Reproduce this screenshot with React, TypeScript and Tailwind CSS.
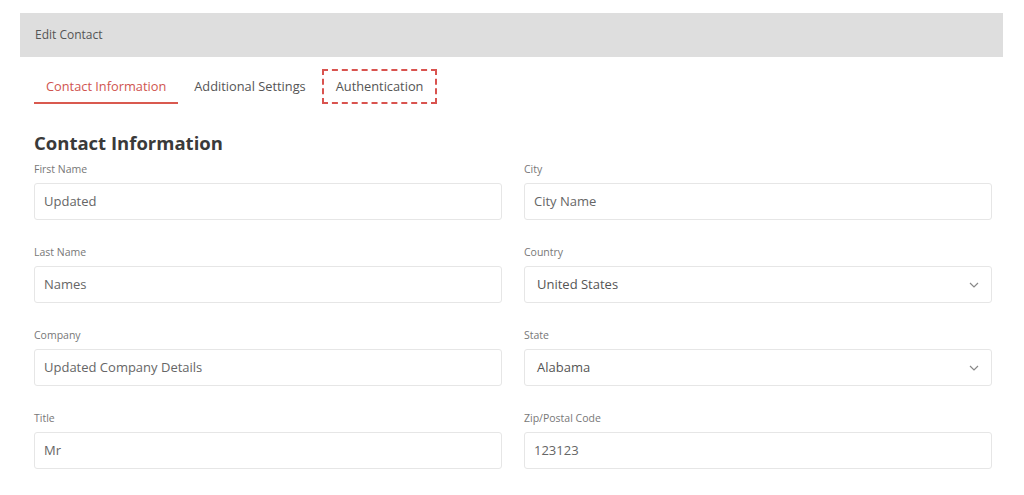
import React from 'react';

interface FieldProps {
  label: string;
  value: string;
  select?: boolean;
}

const Field: React.FC<FieldProps> = ({ label, value, select }) => {
  return (
    <div className="flex flex-col">
      <label className="text-[10.5px] leading-[14px] text-[#777] mb-[7px]">{label}</label>
      {select ? (
        <div className="h-[37px] border border-[#e6e6e6] rounded-[3px] flex items-center justify-between pl-[12px] pr-[12px] text-[13px] text-[#555]">
          <span>{value}</span>
          <svg width="10" height="6" viewBox="0 0 10 6" fill="none" stroke="#888" strokeWidth="1.2">
            <path d="M1 1l4 4 4-4" />
          </svg>
        </div>
      ) : (
        <div className="h-[37px] border border-[#e6e6e6] rounded-[3px] flex items-center px-[9px] text-[13px] text-[#666]">
          {value}
        </div>
      )}
    </div>
  );
};

const left = [
  { label: 'First Name', value: 'Updated' },
  { label: 'Last Name', value: 'Names' },
  { label: 'Company', value: 'Updated Company Details' },
  { label: 'Title', value: 'Mr' },
];

const right = [
  { label: 'City', value: 'City Name' },
  { label: 'Country', value: 'United States', select: true },
  { label: 'State', value: 'Alabama', select: true },
  { label: 'Zip/Postal Code', value: '123123' },
];

const App: React.FC = () => {
  return (
    <div className="w-[1024px] h-[495px] bg-white overflow-hidden pt-[13px] font-['Open_Sans',sans-serif]">
      {/* header bar */}
      <div className="ml-[20px] w-[983px] h-[44px] bg-[#dedede] flex items-center pl-[15px] text-[12px] text-[#555]">
        Edit Contact
      </div>

      <div className="px-[34px] pr-[32px]">
        {/* tabs */}
        <div className="flex items-center mt-[12px] h-[35px]">
          <div className="h-[35px] flex items-center px-[12px] text-[12.8px] text-[#d0554f] border-b-2 border-[#d9594f] pt-[2px]">
            Contact Information
          </div>
          <div className="h-[35px] flex items-center px-[16px] text-[12.8px] text-[#555]">Additional Settings</div>
          <div className="h-[35px] flex items-center px-[12px] text-[12.8px] text-[#555] border-2 border-dashed border-[#d9534f]">
            Authentication
          </div>
        </div>

        <h2 className="mt-[27px] text-[18.5px] leading-[24px] font-bold text-[#3a3a3a]">Contact Information</h2>

        <div className="grid grid-cols-2 gap-x-[22px] mt-[7px]">
          {[0, 1, 2, 3].map((i) => (
            <React.Fragment key={i}>
              <div className="h-[83px]">
                <Field {...left[i]} />
              </div>
              <div className="h-[83px]">
                <Field {...right[i]} />
              </div>
            </React.Fragment>
          ))}
        </div>
      </div>
    </div>
  );
};

export default App;
